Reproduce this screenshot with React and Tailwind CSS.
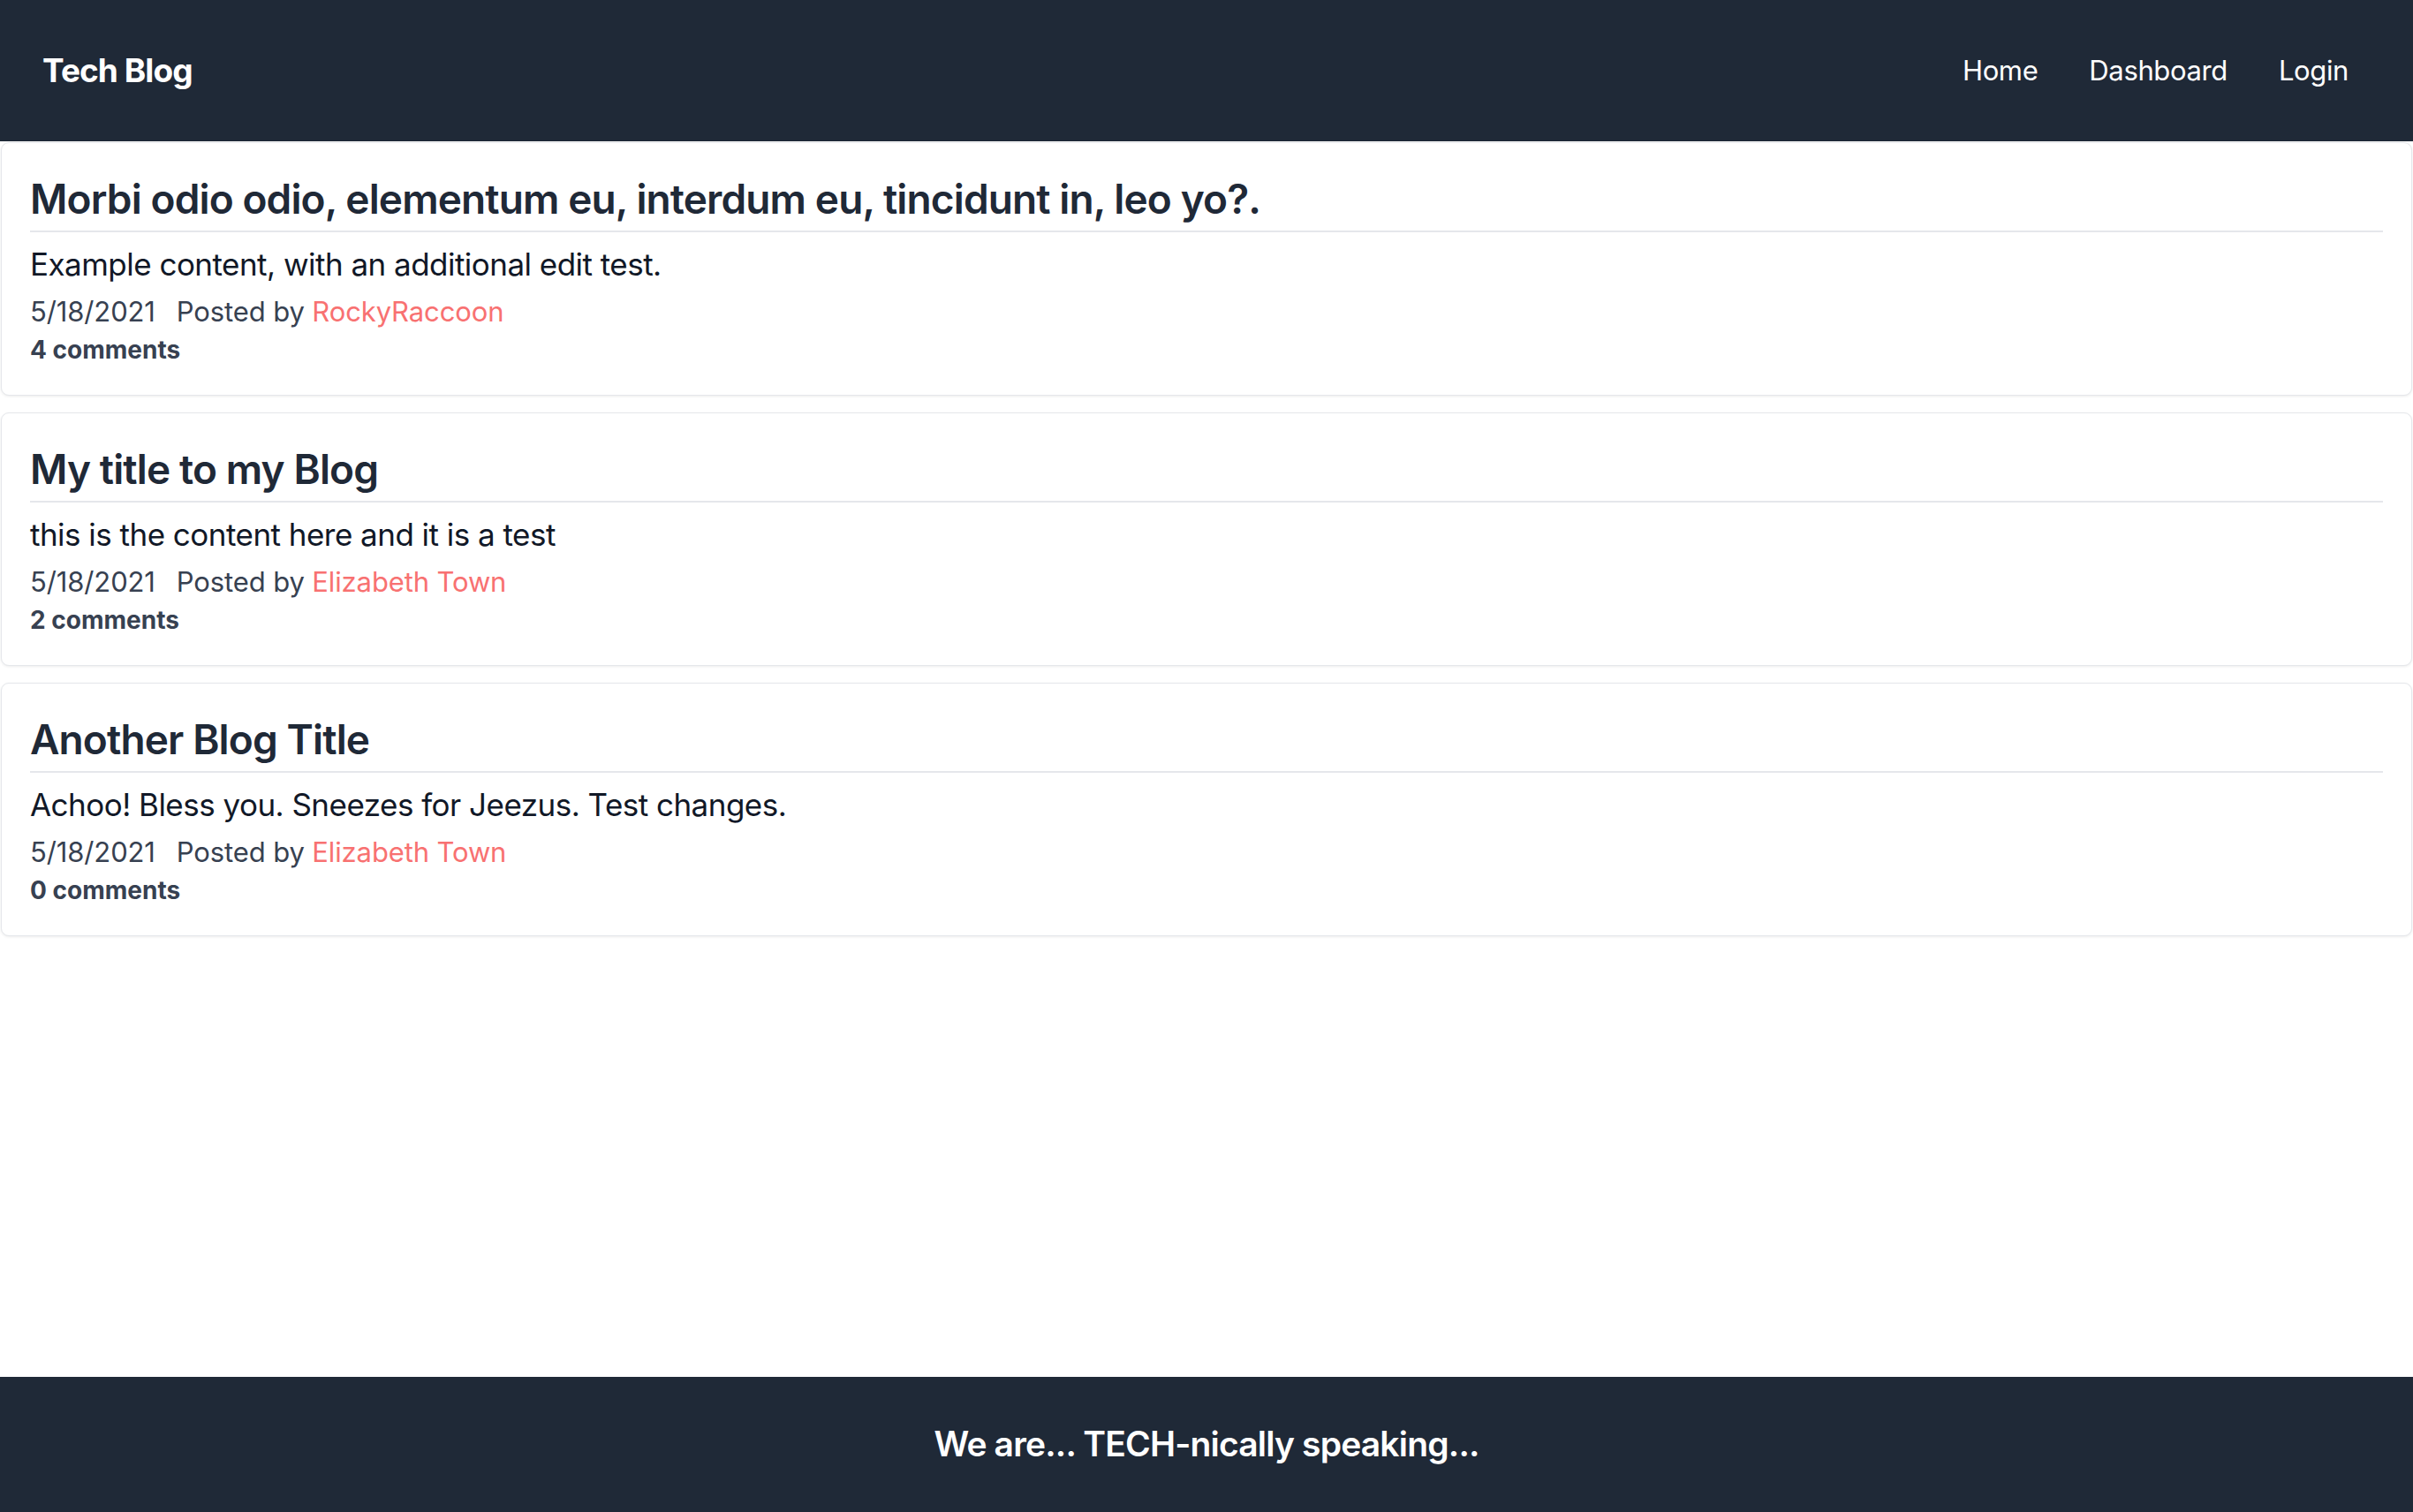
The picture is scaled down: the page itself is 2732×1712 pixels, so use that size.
import React from "react";

const posts = [
  {
    title: "Morbi odio odio, elementum eu, interdum eu, tincidunt in, leo yo?.",
    content: "Example content, with an additional edit test.",
    date: "5/18/2021",
    author: "RockyRaccoon",
    comments: 4,
  },
  {
    title: "My title to my Blog",
    content: "this is the content here and it is a test",
    date: "5/18/2021",
    author: "Elizabeth Town",
    comments: 2,
  },
  {
    title: "Another Blog Title",
    content: "Achoo! Bless you. Sneezes for Jeezus. Test changes.",
    date: "5/18/2021",
    author: "Elizabeth Town",
    comments: 0,
  },
];

function Post({ post }) {
  return (
    <article className="mx-px rounded-[9px] border border-[#e5e7eb] bg-white px-[32px] pt-[36px] pb-[32px] shadow-[0_1px_3px_rgba(0,0,0,0.08)]">
      <h2 className="border-b-2 border-[#e5e7eb] pb-[8px] text-[46px] font-semibold leading-[55px] tracking-[-0.019em] text-[#1f2937]">
        {post.title}
      </h2>
      <p className="mt-[10px] text-[35px] leading-[52px] tracking-[-0.015em] text-[#111827]">{post.content}</p>
      <p className="mt-[4px] text-[31px] leading-[48px] tracking-[-0.004em] text-[#374151]">
        <span>{post.date}</span>
        <span className="ml-[24px]">Posted by </span>
        <span className="text-[#f87171]">{post.author}</span>
      </p>
      <p className="text-[28px] font-bold leading-[38px] text-[#374151]">{post.comments} comments</p>
    </article>
  );
}

export default function App() {
  return (
    <div
      className="flex min-h-screen flex-col bg-white"
      style={{ fontFamily: "Inter, 'Noto Sans', 'Liberation Sans', sans-serif" }}
    >
      <header className="flex h-[160px] items-center justify-between bg-[#1f2937] pl-[48px] pr-[73px]">
        <h1 className="text-[37px] font-bold tracking-[-0.025em] text-white">Tech Blog</h1>
        <nav className="flex items-center gap-[58px] text-[31px] tracking-[-0.012em] text-white">
          <a href="#">Home</a>
          <a href="#">Dashboard</a>
          <a href="#">Login</a>
        </nav>
      </header>
      <main className="flex flex-1 flex-col gap-[19px] pt-px">
        {posts.map((p, i) => (
          <Post key={i} post={p} />
        ))}
      </main>
      <footer className="flex h-[153px] items-center justify-center bg-[#1f2937]">
        <p className="text-[39px] font-semibold tracking-[-0.021em] text-white">We are... TECH-nically speaking...</p>
      </footer>
    </div>
  );
}
